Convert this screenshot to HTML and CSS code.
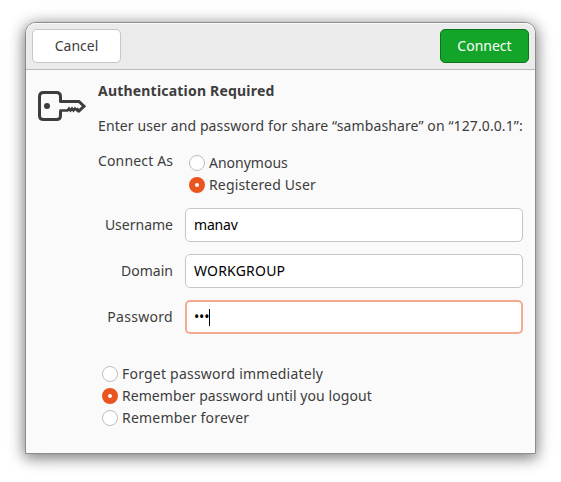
FILE: index.html
```html
<!DOCTYPE html>
<html lang="en">
<head>
<meta charset="utf-8">
<title>Authentication Required</title>
<link rel="stylesheet" href="styles.css">
</head>
<body>
<form class="dialog">
  <header class="titlebar">
    <button type="button" class="button">Cancel</button>
    <button type="button" class="button suggested">Connect</button>
  </header>
  <main class="content">
    <svg class="key" width="50" height="32" viewBox="0 0 50 32" fill="none" stroke="#3d3d3d" stroke-width="3" stroke-linejoin="round">
      <path d="M23.500 12V6.500Q23.500 2.500 19.500 2.500H6.500Q2.500 2.500 2.500 6.500V25.500Q2.500 29.500 6.500 29.500H19.500Q23.500 29.500 23.500 25.500V20.500"/>
      <path d="M22.500 11.500H42L47 16.200L42 21L39.500 18.500" stroke-linejoin="miter"/>
      <path d="M22.500 20.500H30.500L32 18.500L33.500 20.500L35 18.500L36.500 20.500L38 18.500L41.500 21.500" stroke-width="2.500" stroke-linejoin="miter"/>
      <circle cx="10" cy="16" r="3" fill="#3d3d3d" stroke="none"/>
    </svg>
    <div class="details">
      <h1 class="title">Authentication Required</h1>
      <p class="message">Enter user and password for share “sambashare” on “127.0.0.1”:</p>
      <div class="fields">
        <span class="label top">Connect As</span>
        <div class="choices identity">
          <label class="choice"><i class="radio"></i><span>Anonymous</span></label>
          <label class="choice"><i class="radio checked"></i><span class="t-reg">Registered User</span></label>
        </div>
        <span class="label">Username</span>
        <div class="entry"><span class="t-manav">manav</span></div>
        <span class="label">Domain</span>
        <div class="entry"><span class="t-workgroup">WORKGROUP</span></div>
        <span class="label t-password">Password</span>
        <div class="entry focused"><span class="secret">•••</span><i class="caret"></i></div>
      </div>
      <div class="choices remember">
        <label class="choice"><i class="radio"></i><span class="t-forget">Forget password immediately</span></label>
        <label class="choice"><i class="radio checked"></i><span class="t-logout">Remember password until you logout</span></label>
        <label class="choice"><i class="radio"></i><span class="t-forget">Remember forever</span></label>
      </div>
    </div>
  </main>
</form>
</body>
</html>
```
FILE: styles.css
```css
* { box-sizing: border-box; }
body {
  margin: 0;
  padding: 22px 25px;
  height: 482px;
  overflow: hidden;
  background: #fff;
  color: #3d3d3d;
  font: 14px/20px "Noto Sans", "Open Sans", sans-serif;
  white-space: nowrap;
}
.dialog {
  width: 511px;
  height: 432px;
  border: 1px solid #8c8c8c;
  border-radius: 11px 11px 0 0;
  background: #fafafa;
  box-shadow: 0 3px 14px 1px rgba(0,0,0,.45), 0 3px 22px rgba(0,0,0,.12);
}
.titlebar {
  display: flex;
  justify-content: space-between;
  height: 47px;
  padding: 6px;
  border-bottom: 1px solid #b9b9b9;
  border-radius: 10px 10px 0 0;
  background: #ebebeb;
  box-shadow: inset 0 1px #fafafa;
}
.button {
  width: 89px;
  height: 34px;
  padding: 0;
  border: 1px solid #c6c6c6;
  border-radius: 5px;
  background: #fff;
  color: #3d3d3d;
  font: inherit;
}
.suggested { border-color: #0c7519; background: #13a52a; color: #fff; }
.content { display: flex; padding: 11px 12px 0 11px; }
.key { flex: none; margin: 9px 11px 0 0; }
.details { width: 425px; }
.title { margin: 0; font-size: 14px; font-weight: 700; line-height: 20px; letter-spacing: .2px; }
.message { margin: 15px 0; letter-spacing: .11px; }
.fields {
  display: grid;
  grid-template-columns: 75px 338px;
  column-gap: 12px;
  row-gap: 12px;
  align-items: center;
}
.label { text-align: right; }
.label.top { align-self: start; letter-spacing: .15px; }
.choices { display: flex; flex-direction: column; }
.choice { display: flex; align-items: center; gap: 4px; height: 22px; }
.identity { padding: 1px 4px 0; }
.radio {
  width: 16px;
  height: 16px;
  border: 1px solid #bdbdbd;
  border-radius: 50%;
  background: #fff;
}
.radio.checked { border: 6px solid #e95420; background: #fff; }
.entry {
  display: flex;
  align-items: center;
  height: 34px;
  padding: 0 8px;
  border: 1px solid #c6c6c6;
  border-radius: 5px;
  background: #fff;
  color: #000;
}
.entry.focused { padding: 0 7px; border: 2px solid #f4aa90; }
.secret { letter-spacing: -.2px; }
.caret { width: 1px; height: 17px; background: #000; }
.remember { padding: 29px 4px 0; }
.t-reg { letter-spacing: .14px; }
.t-manav { letter-spacing: -.2px; }
.t-workgroup { letter-spacing: .2px; }
.t-password { letter-spacing: .3px; }
.t-forget { letter-spacing: .22px; }
.t-logout { letter-spacing: .06px; }
```
